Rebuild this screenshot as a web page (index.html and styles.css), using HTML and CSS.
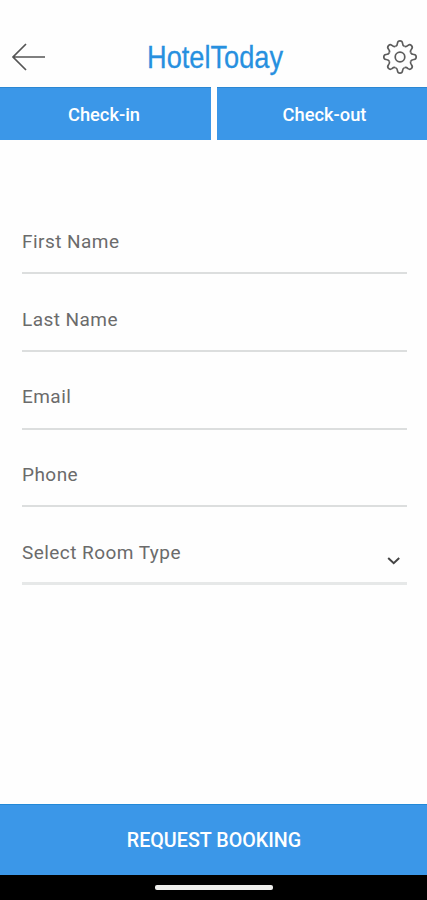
FILE: index.html
```
<!DOCTYPE html>
<html lang="en">
<head>
<meta charset="utf-8">
<title>HotelToday</title>
<link rel="stylesheet" href="styles.css">
</head>
<body>
<main class="screen">
  <header class="header">
    <svg class="back" width="36" height="30" viewBox="0 0 36 30"><path d="M35 15H3M16 2 3 15l13 13"/></svg>
    <svg class="logo" width="180" height="50" viewBox="0 0 180 50"><text x="23" y="36" textLength="136" lengthAdjust="spacingAndGlyphs">HotelToday</text></svg>
    <svg class="gear" width="36" height="36" viewBox="-18 -18 36 36">
      <defs><path id="tooth" d="M-4.4-10.7C-2.6-11.4-2.6-12.6-2.5-14Q-2.2-16.2 0-16.2Q2.2-16.2 2.5-14C2.6-12.6 2.6-11.4 4.4-10.7"/></defs>
      <use href="#tooth"/><use href="#tooth" transform="rotate(45)"/><use href="#tooth" transform="rotate(90)"/><use href="#tooth" transform="rotate(135)"/><use href="#tooth" transform="rotate(180)"/><use href="#tooth" transform="rotate(225)"/><use href="#tooth" transform="rotate(270)"/><use href="#tooth" transform="rotate(315)"/>
      <circle r="4.8"/>
    </svg>
  </header>
  <nav class="dates">
    <div class="date check-in">Check-in</div>
    <div class="date check-out">Check-out</div>
  </nav>
  <form class="form">
    <div class="field first-name">First Name</div>
    <div class="field last-name">Last Name</div>
    <div class="field email">Email</div>
    <div class="field phone">Phone</div>
    <div class="field select"><span>Select Room Type</span><svg class="chevron" width="14" height="10" viewBox="0 0 14 10"><path d="m1.2 2 5.5 5.2L12.2 2"/></svg></div>
  </form>
  <div class="request"><span>REQUEST BOOKING</span></div>
  <footer class="system"><div class="handle"></div></footer>
</main>
</body>
</html>
```
FILE: styles.css
```
* { box-sizing: border-box; }
body { margin: 0; background: #fefefe; font-family: Roboto, sans-serif; }
svg { display: block; fill: none; }
.screen { width: 427px; height: 900px; display: flex; flex-direction: column; overflow: hidden; }
.header { height: 87px; padding: 31px 9.5px 4px 9.5px; display: flex; align-items: center; justify-content: space-between; }
.back { stroke: #555; stroke-width: 1.7; }
.logo { overflow: visible; }
.logo text { font: 32px "Liberation Sans", Arial, sans-serif; fill: #2790df; stroke: #2790df; stroke-width: .3; }
.gear { stroke: #5c5c5c; stroke-width: 1.7; }
.dates { height: 53px; display: grid; grid-template-columns: 211px 210px; gap: 6px; }
.date { background: #3b97e8; border-top: 1px solid #2b87d3; color: #fff; font-size: 18.3px; font-weight: 500; line-height: 54px; height: 53px; text-align: center; }
.check-in { padding-right: 3px; }
.check-out { padding-left: 5px; }
.form { flex: 1; padding: 56.5px 20px 0 22px; }
.field { height: 77.7px; padding-top: 30.5px; border-bottom: 2px solid #dcdede; font-size: 19px; line-height: 30px; letter-spacing: .45px; color: #6b6b6b; }
.select { display: flex; justify-content: space-between; border-bottom: 3px solid #e6e8e8; height: 78.2px; }
.chevron { margin: 18px 6px 0 0; stroke: #444; stroke-width: 2; }
.request { height: 71px; background: #3b97e8; border-top: 1px solid #2289d8; color: #fff; font-size: 19.7px; font-weight: 500; line-height: 71px; text-align: center; padding-left: 1px; }
.system { height: 25px; background: #000; padding-top: 10px; }
.handle { width: 118px; height: 5px; margin: 0 auto; border-radius: 2px; background: #eeeeec; }
```
